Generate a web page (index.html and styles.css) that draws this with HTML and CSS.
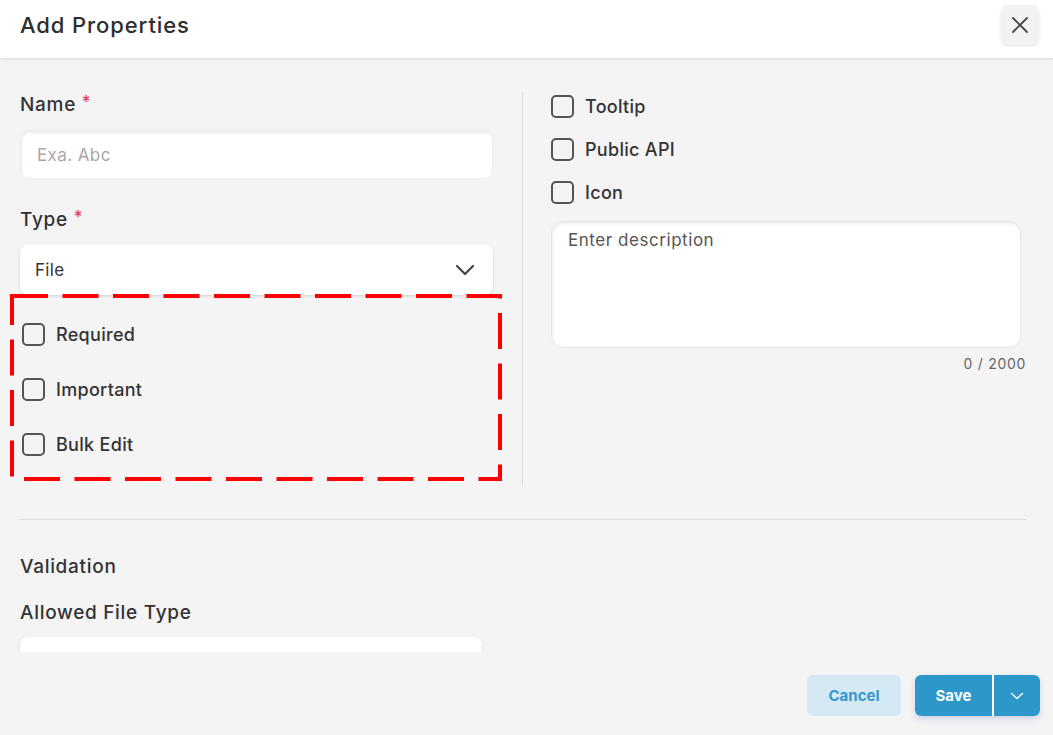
FILE: index.html
```html
<!DOCTYPE html>
<html>
<head>
<meta charset="utf-8">
<link rel="stylesheet" href="styles.css">
</head>
<body>
<div class="header">
  <h1 class="title">Add Properties</h1>
  <button class="close-btn" aria-label="Close">
    <svg width="20" height="20" viewBox="0 0 20 20"><path d="M3 3 L17 17 M17 3 L3 17" stroke="#444" stroke-width="1.8" stroke-linecap="round" fill="none"/></svg>
  </button>
</div>
<div class="content">
  <div class="columns">
    <div class="col-left">
      <div class="label">Name <span class="req">*</span></div>
      <div class="input"><span class="placeholder">Exa. Abc</span></div>
      <div class="label label-type">Type <span class="req">*</span></div>
      <div class="select">
        <span class="select-value">File</span>
        <svg width="20" height="12" viewBox="0 0 20 12"><path d="M2 2 L10 10 L18 2" stroke="#444" stroke-width="2.2" stroke-linecap="round" stroke-linejoin="round" fill="none"/></svg>
      </div>
      <div class="check-list">
        <div class="check-row"><span class="box"></span><span class="check-label">Required</span></div>
        <div class="check-row"><span class="box"></span><span class="check-label">Important</span></div>
        <div class="check-row"><span class="box"></span><span class="check-label">Bulk Edit</span></div>
        <svg class="dash-overlay" width="492" height="187" viewBox="0 0 492 187"><rect x="2" y="2" width="488" height="183" fill="none" stroke="#ff0000" stroke-width="4" stroke-dasharray="36 14.5"/></svg>
      </div>
    </div>
    <div class="col-right">
      <div class="check-row small"><span class="box"></span><span class="check-label">Tooltip</span></div>
      <div class="check-row small"><span class="box"></span><span class="check-label">Public API</span></div>
      <div class="check-row small"><span class="box"></span><span class="check-label">Icon</span></div>
      <div class="textarea"><span class="ta-placeholder">Enter description</span></div>
      <div class="counter">0 / 2000</div>
    </div>
  </div>
  <div class="hr"></div>
  <div class="section-title">Validation</div>
  <div class="label label-file">Allowed File Type</div>
  <div class="input input-file"></div>
</div>
<div class="footer">
  <button class="btn-cancel">Cancel</button>
  <div class="save-group">
    <button class="btn-save">Save</button>
    <button class="btn-save-more" aria-label="More">
      <svg width="14" height="8" viewBox="0 0 14 8"><path d="M1.5 1.5 L7 6.5 L12.5 1.5" stroke="#fff" stroke-width="1.4" stroke-linecap="round" stroke-linejoin="round" fill="none"/></svg>
    </button>
  </div>
</div>
</body>
</html>
```

FILE: styles.css
```css
* { box-sizing: border-box; }
html, body {
  margin: 0;
  padding: 0;
  background: #f4f4f4;
  font-family: Inter, "Liberation Sans", sans-serif;
  color: #333;
  width: 1053px;
  height: 735px;
  overflow: hidden;
}
.header {
  height: 58px;
  background: #fff;
  box-shadow: 0 1px 3px rgba(0,0,0,0.12);
  display: flex;
  justify-content: space-between;
  align-items: flex-start;
  padding: 5px 14px 0 20px;
  position: relative;
  z-index: 1;
}
.title {
  margin: 0;
  font-size: 22px;
  line-height: 40px;
  font-weight: 500;
  color: #2e2e2e;
  letter-spacing: 0.9px;
}
.close-btn {
  width: 38px;
  height: 40px;
  border: none;
  border-radius: 7px;
  background: #f2f2f2;
  box-shadow: 0 1px 3px rgba(0,0,0,0.12);
  display: flex;
  align-items: center;
  justify-content: center;
  padding: 0;
}
.content {
  height: 594px;
  overflow: hidden;
  padding: 34px 27px 0 20px;
}
.columns {
  display: flex;
}
.col-left {
  width: 503px;
  padding-right: 29px;
  border-right: 1px solid #dedede;
}
.col-right {
  flex: 1;
  padding-left: 28px;
  display: flex;
  flex-direction: column;
}
.label {
  font-size: 19px;
  line-height: 26px;
  height: 26px;
  font-weight: 500;
  color: #333;
  letter-spacing: 0.7px;
}
.req {
  color: #e8405a;
  font-size: 17px;
  line-height: 0;
  position: relative;
  top: -3px;
}
.input {
  height: 49px;
  margin-top: 12px;
  background: #fff;
  border-radius: 8px;
  box-shadow: inset 1px 2px 3px rgba(0,0,0,0.08);
  border: 1px solid #ececec;
  display: flex;
  align-items: center;
  padding-left: 16px;
}
.placeholder {
  font-size: 17px;
  color: #a8a8a8;
  letter-spacing: 0.4px;
}
.label-type { margin-top: 28px; }
.select {
  height: 51px;
  margin-top: 11px;
  background: #fff;
  border-radius: 8px;
  box-shadow: 0 1px 3px rgba(0,0,0,0.15);
  display: flex;
  align-items: center;
  justify-content: space-between;
  padding: 0 18px 0 15px;
}
.select-value {
  font-size: 17px;
  color: #333;
  letter-spacing: 0.3px;
}
.check-list {
  position: relative;
  padding: 12px 0 15px 0;
}
.check-row {
  height: 55px;
  display: flex;
  align-items: center;
  gap: 11px;
  padding-left: 2px;
}
.check-row.small {
  height: 28px;
  margin-bottom: 15px;
  padding-left: 0;
}
.check-row.small:nth-child(3) { margin-bottom: 0; }
.box {
  width: 23px;
  height: 23px;
  border: 2.5px solid #555;
  border-radius: 5px;
  background: transparent;
  flex: none;
}
.check-label {
  font-size: 18px;
  font-weight: 500;
  color: #333;
  letter-spacing: 0.3px;
}
.dash-overlay {
  position: absolute;
  left: -10px;
  top: -1px;
}
.textarea {
  margin-top: 15px;
  width: 470px;
  height: 127px;
  background: #fff;
  border-radius: 12px;
  border: 1px solid #e6e6e6;
  box-shadow: inset 1px 2px 3px rgba(0,0,0,0.07);
  padding: 8px 16px;
}
.ta-placeholder {
  font-size: 17px;
  color: #555;
  letter-spacing: 0.55px;
}
.counter {
  margin-top: 7px;
  text-align: right;
  font-size: 14px;
  line-height: 18px;
  color: #666;
  letter-spacing: 0.7px;
}
.hr {
  margin-top: 32px;
  height: 1px;
  background: #dedede;
}
.section-title {
  margin-top: 34px;
  font-size: 19px;
  line-height: 26px;
  font-weight: 500;
  color: #333;
  letter-spacing: 0.7px;
}
.label-file { margin-top: 20px; }
.input-file {
  width: 462px;
  margin-top: 11px;
  border: none;
  box-shadow: 0 1px 3px rgba(0,0,0,0.12);
}
.footer {
  height: 83px;
  display: flex;
  justify-content: flex-end;
  align-items: flex-start;
  padding: 23px 13px 0 0;
  gap: 14px;
}
.btn-cancel {
  width: 94px;
  height: 41px;
  border: none;
  border-radius: 6px;
  background: #d5e9f5;
  color: #3498cc;
  font-family: inherit;
  font-size: 15px;
  font-weight: 700;
}
.save-group {
  display: flex;
  height: 41px;
  border-radius: 6px;
  overflow: hidden;
  box-shadow: 0 3px 6px rgba(60,80,160,0.2);
}
.btn-save {
  width: 79px;
  border: none;
  background: #2e97c9;
  color: #fff;
  font-family: inherit;
  font-size: 15px;
  font-weight: 700;
  border-right: 2px solid #fff;
}
.btn-save-more {
  width: 46px;
  border: none;
  background: #2e97c9;
  display: flex;
  align-items: center;
  justify-content: center;
  padding: 0;
}
```
